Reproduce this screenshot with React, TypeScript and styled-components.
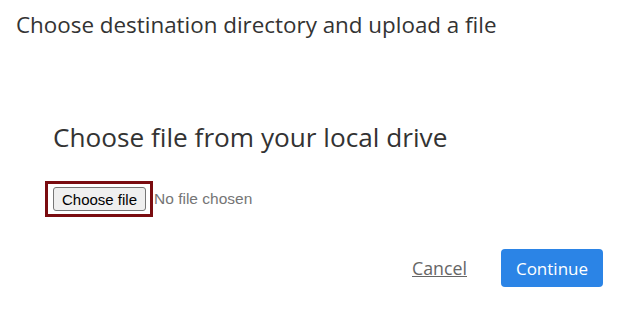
import { FunctionComponent } from "react";
import styled, { createGlobalStyle } from "styled-components";

const GlobalStyle = createGlobalStyle`
  html, body {
    margin: 0;
    padding: 0;
    background: #ffffff;
  }
  body {
    font-family: "Open Sans", "Noto Sans", sans-serif;
    color: #333333;
  }
`;

const Page = styled.div`
  width: 637px;
  height: 332px;
  box-sizing: border-box;
  display: flex;
  flex-direction: column;
`;

const Title = styled.h1`
  margin: 0;
  padding: 9px 0 0 16px;
  font-size: 22.4px;
  font-weight: 400;
  line-height: 32px;
  color: #333333;
`;

const Body = styled.section`
  display: flex;
  flex-direction: column;
  padding: 78px 34px 0 45px;
`;

const Heading = styled.h2`
  margin: 0 0 0 8px;
  font-size: 26.2px;
  font-weight: 400;
  line-height: 36px;
  color: #333333;
`;

const FileField = styled.div`
  margin-top: 26px;
  display: flex;
  align-items: center;
  gap: 1px;
`;

const FileFrame = styled.div`
  display: flex;
  border: 3px solid #7a0c10;
  padding: 3px 4px 3px 5px;
`;

const FileButton = styled.button`
  font-family: "Liberation Sans", Arial, sans-serif;
  font-size: 15px;
  color: #000000;
  background: #efefef;
  border: 1px solid #767676;
  border-radius: 3px;
  padding: 2px 8px;
  height: 24px;
`;

const FileStatus = styled.span`
  font-family: "Liberation Sans", Arial, sans-serif;
  font-size: 15.5px;
  color: #757575;
`;

const Actions = styled.div`
  margin-top: 32px;
  display: flex;
  justify-content: flex-end;
  align-items: center;
  gap: 34px;
`;

const CancelLink = styled.a`
  font-size: 17.8px;
  color: #666666;
  text-decoration: underline;
  cursor: pointer;
`;

const ContinueButton = styled.button`
  font-family: "Open Sans", sans-serif;
  font-size: 17px;
  color: #ffffff;
  background: #2b84e6;
  border: none;
  border-radius: 4px;
  width: 102px;
  height: 38px;
  cursor: pointer;
`;

const App: FunctionComponent = () => {
  return (
    <>
      <GlobalStyle />
      <Page>
        <Title>Choose destination directory and upload a file</Title>
        <Body>
          <Heading>Choose file from your local drive</Heading>
          <FileField>
            <FileFrame>
              <FileButton type="button">Choose file</FileButton>
            </FileFrame>
            <FileStatus>No file chosen</FileStatus>
          </FileField>
          <Actions>
            <CancelLink>Cancel</CancelLink>
            <ContinueButton type="button">Continue</ContinueButton>
          </Actions>
        </Body>
      </Page>
    </>
  );
};

export default App;
